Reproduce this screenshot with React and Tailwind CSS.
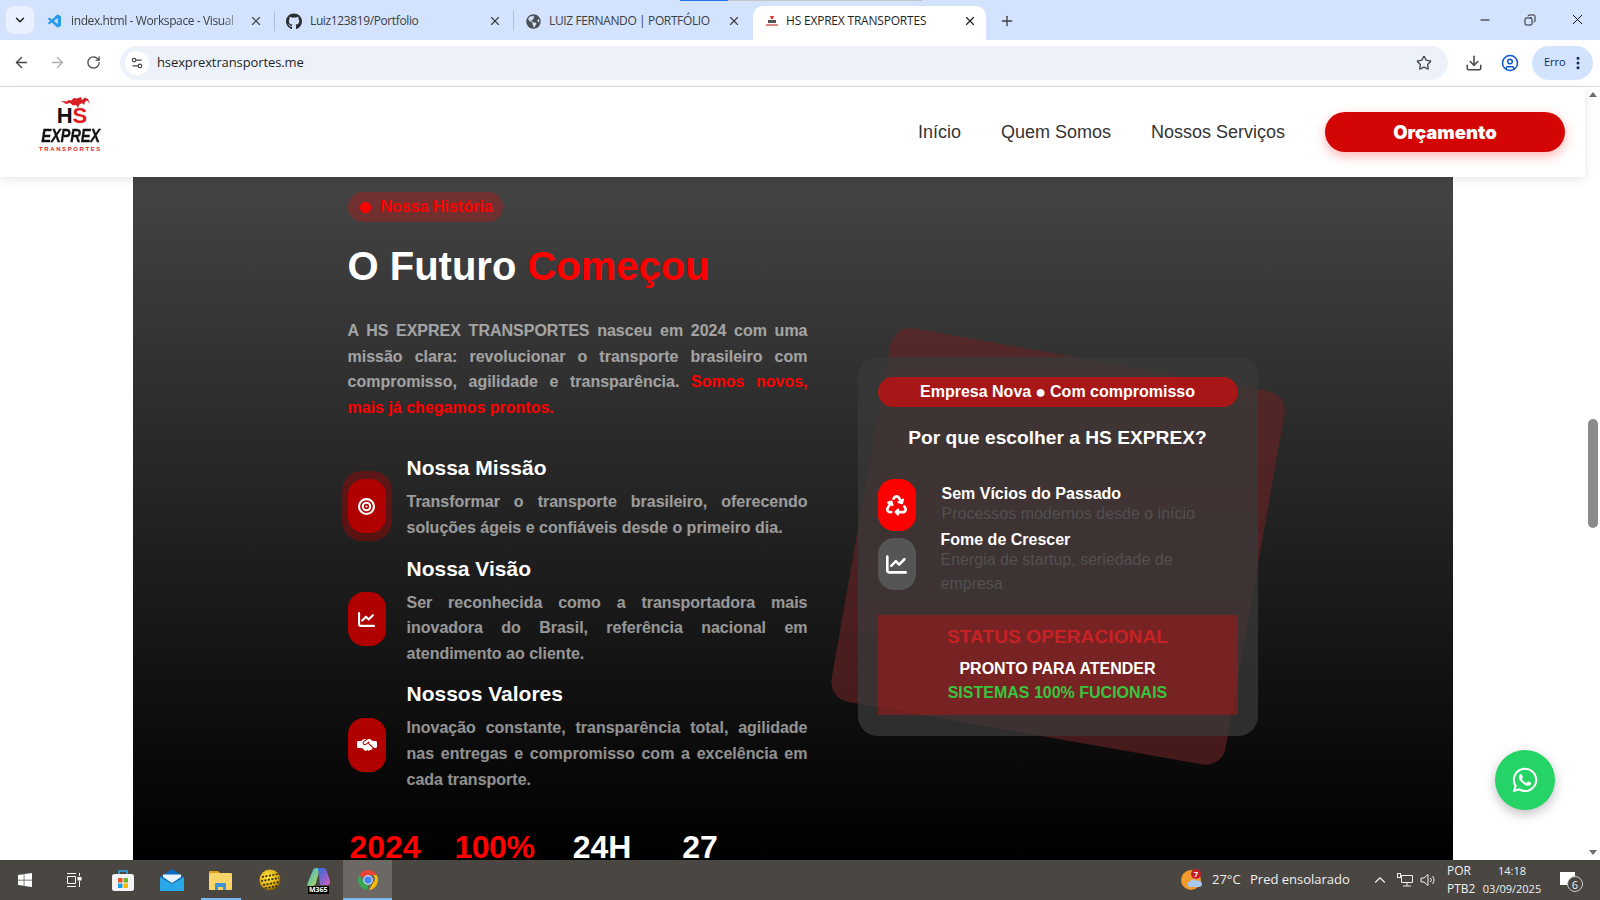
import React from "react"
import { ArrowLeft, ArrowRight, RotateCw, Star, Download, CircleUser, EllipsisVertical, Settings2, X, Plus, Minus, ChevronDown, ChevronUp, Copy } from "lucide-react"
import { FaGithub, FaGlobeAmericas, FaWindows } from "react-icons/fa"
import { FaBullseye, FaChartLine, FaHandshakeSimple, FaRecycle, FaWhatsapp } from "react-icons/fa6"
import { VscVscode } from "react-icons/vsc"

function Tab({ icon, title, fade, sep }) {
  return (
    <div className="relative flex h-[34px] w-[239px] shrink-0 items-center pb-[4px] pl-[11px] pr-[12px]">
      <span className="flex w-[16px] shrink-0 justify-center">{icon}</span>
      <span className={`ml-[8px] flex-1 overflow-hidden whitespace-nowrap text-[12px] tracking-[-0.38px] text-[#3c4043] ${fade ? "[mask-image:linear-gradient(to_right,black_88%,transparent)]" : ""}`}>{title}</span>
      <X size={14} strokeWidth={2} className="ml-[6px] shrink-0 text-[#3c4043]" />
      {sep && <span className="absolute right-0 top-[5px] h-[20px] w-px bg-[#a8c0e8]" />}
    </div>
  )
}

function TabStrip() {
  return (
    <div className="relative flex h-[40px] items-end bg-[#d3e3fd] pl-[6px] font-['Open_Sans',sans-serif]">
      <div className="absolute left-[680px] top-0 h-px w-[48px] bg-[#1a73e8]" />
      <div className="absolute left-[728px] top-0 h-px w-[194px] bg-[#c4c7c5]" />
      <div className="mb-[6px] flex h-[28px] w-[28px] items-center justify-center rounded-[8px] bg-[#e9f1fe] mr-[2px]">
        <ChevronDown size={14} strokeWidth={2.5} className="text-[#1f1f1f]" />
      </div>
      <Tab icon={<VscVscode size={17} className="text-[#2a9be8]" />} title="index.html - Workspace - Visual" fade sep />
      <Tab icon={<FaGithub size={17} className="text-[#2b2f33]" />} title="Luiz123819/Portfolio" sep />
      <Tab icon={<FaGlobeAmericas size={15} className="text-[#4d5156]" />} title="LUIZ FERNANDO | PORTFÓLIO" />
      <div className="flex h-[34px] w-[233px] shrink-0 items-center rounded-t-[10px] bg-white pb-[4px] pl-[12px] pr-[9px]">
        <svg width="14" height="12" viewBox="0 0 14 12">
          <path d="M5 1h4l-1 3H6z" fill="#d33" />
          <rect x="3" y="5" width="8" height="3" fill="#555" />
          <rect x="1" y="9" width="12" height="2" fill="#d88" />
        </svg>
        <span className="ml-[7px] flex-1 overflow-hidden whitespace-nowrap text-[12px] tracking-[-0.2px] text-[#1f1f1f]">HS EXPREX TRANSPORTES</span>
        <X size={14} strokeWidth={2} className="shrink-0 text-[#1f1f1f]" />
      </div>
      <div className="ml-[11px] flex h-[34px] w-[20px] items-center justify-center pb-[4px]">
        <Plus size={16} strokeWidth={2} className="text-[#3c4043]" />
      </div>
      <div className="ml-auto flex h-[40px] items-center pb-[1px] text-[#111]">
        <Minus size={14} strokeWidth={1.8} className="mr-[32px]" />
        <Copy size={12} strokeWidth={1.8} className="mr-[33px] -scale-x-100" />
        <X size={17} strokeWidth={1.4} className="mr-[14px]" />
      </div>
    </div>
  )
}

function Toolbar() {
  return (
    <div className="flex h-[47px] items-center border-b border-[#dadce0] bg-white pb-px font-['Open_Sans',sans-serif]">
      <ArrowLeft size={17} strokeWidth={2} className="ml-[13px] text-[#474747]" />
      <ArrowRight size={17} strokeWidth={2} className="ml-[19px] text-[#b0b0b0]" />
      <RotateCw size={15} strokeWidth={2} className="ml-[20px] text-[#474747]" />
      <div className="ml-[19px] flex h-[34px] w-[1328px] items-center rounded-full bg-[#edf2fa] pl-[5px] pr-[16px]">
        <span className="flex h-[24px] w-[24px] items-center justify-center rounded-full bg-white">
          <Settings2 size={14} strokeWidth={2} className="text-[#474747]" />
        </span>
        <span className="ml-[8px] text-[13px] tracking-[-0.1px] text-[#1f1f1f]">hsexprextransportes.me</span>
        <Star size={16} strokeWidth={2} className="ml-auto text-[#474747]" />
      </div>
      <Download size={18} strokeWidth={2} className="ml-[17px] text-[#474747]" />
      <CircleUser size={18} strokeWidth={2} className="ml-[18px] text-[#0b57d0]" />
      <div className="ml-[13px] flex h-[34px] w-[61px] items-center rounded-full bg-[#d3e3fd] pl-[12px]">
        <span className="text-[11px] text-[#0b2a5c]">Erro</span>
        <EllipsisVertical size={16} strokeWidth={2.5} className="ml-[4px] text-[#0b2a5c]" />
      </div>
    </div>
  )
}

function Logo() {
  return (
    <div className="mb-[15px] ml-[39px] flex w-[63px] flex-col items-center leading-none">
      <svg width="30" height="11" viewBox="0 0 30 11" className="ml-[10px]">
        <path d="M0 4l5 .5L8 3l2 .5L13 1l3 .5L20 0l1 3 3-2.500 3 1.500 2 5-3-3.500-2 1.500-1 3-2-2-3 2-1 3-2-3-3 .5L9 6 5 7z" fill="#d81f26" />
      </svg>
      <div className="ml-[3px] flex h-[16px] items-center text-[22px] font-bold leading-[16px] font-['Liberation_Sans',sans-serif]">
        <span className="text-[#111]">H</span>
        <span className="text-[#e01b22]">S</span>
      </div>
      <div className="mt-[5px] h-[14px] origin-center scale-x-[0.78] text-[19px] font-bold italic leading-[14px] tracking-[-0.3px] text-[#111] font-['Liberation_Sans',sans-serif] [-webkit-text-stroke:0.3px_#111]">EXPREX</div>
      <div className="mt-[4px] h-[5px] whitespace-nowrap text-[6px] font-bold leading-[5px] tracking-[1.6px] text-[#d81f26] font-['Liberation_Sans',sans-serif]">TRANSPORTES</div>
    </div>
  )
}

function Nav() {
  return (
    <header className="relative z-10 flex h-[90px] shrink-0 items-center bg-white shadow-[0_2px_10px_rgba(0,0,0,0.1)]">
      <Logo />
      <nav className="ml-auto flex items-center gap-[40px] text-[18px] text-[#333]">
        <span>Início</span>
        <span>Quem Somos</span>
        <span>Nossos Serviços</span>
      </nav>
      <div className="ml-[40px] mr-[20px] flex h-[40px] w-[240px] items-center justify-center rounded-[20px] bg-[#d40505] pt-[1px] text-[18.5px] font-black text-white shadow-[0_4px_12px_rgba(255,0,0,0.3)] font-['Inter',sans-serif]">
        Orçamento
      </div>
    </header>
  )
}

function Item({ icon, title, children, ring }) {
  return (
    <div className="flex items-center">
      <div className="relative mt-[2px] flex h-[54px] w-[38px] shrink-0 items-center justify-center rounded-[16px] bg-[#b00000] text-white">
        {ring && <span className="absolute -inset-x-[6px] -inset-y-[8px] rounded-[20px] bg-[#b00000]/40" />}
        <span className="relative">{icon}</span>
      </div>
      <div className="ml-[21px] flex-1 pb-[15px]">
        <h3 className="mb-[8px] text-[21px] font-bold leading-[26px] text-white">{title}</h3>
        <p className="text-justify text-[16px] font-bold leading-[25.6px] text-white/55">{children}</p>
      </div>
    </div>
  )
}

function LeftColumn() {
  return (
    <div className="w-[460px] shrink-0">
      <div className="flex h-[30px] w-[155px] items-center rounded-full bg-[#ff0000]/25 pl-[12px]">
        <span className="h-[11px] w-[11px] rounded-full bg-[#ff0000]" />
        <span className="ml-[10px] text-[16px] font-bold text-[#ff0000]">Nossa História</span>
      </div>
      <h2 className="mt-[19px] text-[40px] font-bold leading-[50px] text-white">
        O Futuro <span className="text-[#ff0000]">Começou</span>
      </h2>
      <p className="mt-[27px] text-justify text-[16px] font-bold leading-[25.6px] text-white/55">
        A HS EXPREX TRANSPORTES nasceu em 2024 com uma missão clara: revolucionar o transporte brasileiro com compromisso, agilidade e transparência. <span className="text-[#ff0000]">Somos novos, mais já chegamos prontos.</span>
      </p>
      <div className="mt-[35px]">
        <Item ring icon={<FaBullseye size={17} />} title="Nossa Missão">Transformar o transporte brasileiro, oferecendo soluções ágeis e confiáveis desde o primeiro dia.</Item>
        <Item icon={<FaChartLine size={17} />} title="Nossa Visão">Ser reconhecida como a transportadora mais inovadora do Brasil, referência nacional em atendimento ao cliente.</Item>
        <Item icon={<FaHandshakeSimple size={20} />} title="Nossos Valores">Inovação constante, transparência total, agilidade nas entregas e compromisso com a excelência em cada transporte.</Item>
      </div>
      <div className="mt-[20px] flex gap-[32px] text-center text-[32px] font-bold leading-[40px]">
        <span className="w-[75px] text-[#ff0000]">2024</span>
        <span className="w-[78px] tracking-[-0.5px] text-[#ff0000]">100%</span>
        <span className="w-[75px] text-white">24H</span>
        <span className="w-[57px] text-white">27</span>
      </div>
    </div>
  )
}

function RightCard() {
  return (
    <div className="relative mt-[165px] h-[379px] w-[400px] shrink-0">
      <div className="absolute inset-0 rotate-[10deg] rounded-[20px] bg-[#672424]/65" />
      <div className="relative h-full rounded-[20px] bg-[#3a3a3a]/75 p-[20px]">
        <div className="flex h-[30px] items-center justify-center rounded-full bg-[#a81717] text-[16px] font-bold text-white">Empresa Nova <span className="mx-[4px] text-[18px] leading-none">●</span> Com compromisso</div>
        <h3 className="mt-[19px] h-[24px] text-center text-[19.2px] font-bold leading-[24px] text-white">Por que escolher a HS EXPREX?</h3>
        <div className="mt-[29px] flex h-[52px] items-center">
          <span className="flex h-[52px] w-[38px] shrink-0 items-center justify-center rounded-[16px] bg-[#ff0000] text-white"><FaRecycle size={21} /></span>
          <div className="ml-[26px] pt-[2px]">
            <div className="text-[16px] font-bold leading-[16px] text-white">Sem Vícios do Passado</div>
            <div className="text-[16px] leading-[24px] text-[#505050]">Processos modernos desde o início</div>
          </div>
        </div>
        <div className="mt-[1px] flex h-[64px] items-center">
          <span className="flex h-[52px] w-[38px] shrink-0 items-center justify-center rounded-[16px] bg-[#555] text-white"><FaChartLine size={21} /></span>
          <div className="ml-[25px] w-[297px]">
            <div className="text-[16px] font-bold leading-[16px] text-white">Fome de Crescer</div>
            <div className="text-[16px] leading-[24px] text-[#505050]">Energia de startup, seriedade de empresa</div>
          </div>
        </div>
        <div className="mt-[19px] flex h-[100px] flex-col items-center bg-[#ff0000]/30 pt-[10px] font-bold">
          <div className="text-[19.2px] leading-[24px] text-[#c62226]">STATUS OPERACIONAL</div>
          <div className="mt-[9px] text-[16px] leading-[22px] text-white">PRONTO PARA ATENDER</div>
          <div className="mt-[1px] text-[16px] leading-[24px] text-[#38c440]">SISTEMAS 100% FUCIONAIS</div>
        </div>
      </div>
    </div>
  )
}

function Scrollbar() {
  return (
    <div className="flex w-[15px] shrink-0 flex-col items-center bg-white py-[5px] text-[#7a7a7a]">
      <div className="h-0 w-0 border-x-[4px] border-b-[5px] border-x-transparent border-b-[#6f6f6f]" />
      <div className="mt-[322px] h-[109px] w-[10px] rounded-full bg-[#8b8b8b]" />
      <div className="mt-auto h-0 w-0 border-x-[4px] border-t-[5px] border-x-transparent border-t-[#6f6f6f]" />
    </div>
  )
}

function ChromeLogo() {
  return (
    <svg width="24" height="24" viewBox="0 0 48 48">
      <path d="M24 4a20 20 0 0 1 17.3 10H24a10 10 0 0 0-9.2 6L6.9 13.7A20 20 0 0 1 24 4z" fill="#ea4335" />
      <path d="M41.3 14A20 20 0 0 1 26 43.9L34 30a10 10 0 0 0 0-16z" fill="#fbbc04" />
      <path d="M6.9 13.7 15.5 29a10 10 0 0 0 9.5 5l-3.5 9.8A20 20 0 0 1 6.9 13.7z" fill="#34a853" />
      <circle cx="24" cy="24" r="9.5" fill="#fff" />
      <circle cx="24" cy="24" r="7.5" fill="#4285f4" />
    </svg>
  )
}

function Taskbar() {
  const slot = "flex h-[40px] w-[49px] items-center justify-center"
  return (
    <div className="flex h-[40px] shrink-0 items-center bg-[#4a4642] font-['Open_Sans',sans-serif] text-[#f0f0f0]">
      <div className={slot}><FaWindows size={16} className="text-white" /></div>
      <div className={slot}>
        <svg width="16" height="14" viewBox="0 0 16 14" fill="none" stroke="#fff" strokeWidth="1">
          <path d="M1 .5h9M1 13.5h9M1.5 3.5h8v7h-8zM13.5 0v3M13.5 8v6" />
          <rect x="12" y="4.5" width="3" height="2.5" fill="#fff" />
        </svg>
      </div>
      <div className={slot}>
        <svg width="24" height="24" viewBox="0 0 24 24">
          <path d="M8 6V3h8v3" fill="none" stroke="#35a7e8" strokeWidth="1.6" />
          <rect x="1" y="6" width="22" height="17" rx="2.5" fill="#f3f3f3" />
          <rect x="7" y="10" width="4.5" height="4.5" fill="#e8512a" />
          <rect x="12.5" y="10" width="4.5" height="4.5" fill="#6fb52c" />
          <rect x="7" y="15.5" width="4.5" height="4.5" fill="#1ba1e2" />
          <rect x="12.5" y="15.5" width="4.5" height="4.5" fill="#fbb900" />
        </svg>
      </div>
      <div className={slot}>
        <svg width="24" height="22" viewBox="0 0 24 22">
          <path d="M12 0 24 8 12 15 0 8z" fill="#0a6cc4" />
          <path d="M0 8 12 15 24 8v14H0z" fill="#27a8e8" />
          <path d="M3 5.5h18V8l-9 6-9-6z" fill="#e8f6ff" />
        </svg>
      </div>
      <div className={`${slot} relative`}>
        <svg width="23" height="20" viewBox="0 0 23 20">
          <path d="M0 2a1 1 0 0 1 1-1h8l2 2h-11z" fill="#e2a21e" />
          <rect y="3" width="23" height="17" rx="1" fill="#f7d568" />
          <path d="M6 20v-6a1 1 0 0 1 1-1h9a1 1 0 0 1 1 1v6h-3v-3H9v3z" fill="#3a92d8" />
        </svg>
        <div className="absolute bottom-0 left-[5px] h-[2px] w-[40px] bg-[#7cb6ea]" />
      </div>
      <div className={slot}>
        <svg width="22" height="22" viewBox="0 0 22 22">
          <defs>
            <radialGradient id="ball" cx="40%" cy="35%" r="70%">
              <stop offset="0" stopColor="#ffe93d" />
              <stop offset="0.7" stopColor="#d9a60f" />
              <stop offset="1" stopColor="#4d3d0c" />
            </radialGradient>
          </defs>
          <circle cx="11" cy="11" r="10.5" fill="url(#ball)" />
          <path d="M3 8l16-3M2 12l18-3M4 16l16-3M6 19l12-2" stroke="#2a2410" strokeWidth="1.6" strokeDasharray="2 1.5" fill="none" />
        </svg>
      </div>
      <div className={`${slot} relative`}>
        <svg width="24" height="18" viewBox="0 0 24 18" className="-mt-[6px]">
          <defs>
            <linearGradient id="m365a" x1="0" y1="0" x2="1" y2="1">
              <stop offset="0" stopColor="#2fb6ea" />
              <stop offset="1" stopColor="#c6d93c" />
            </linearGradient>
            <linearGradient id="m365b" x1="0" y1="0" x2="1" y2="1">
              <stop offset="0" stopColor="#1f6fe0" />
              <stop offset="1" stopColor="#e15bb8" />
            </linearGradient>
          </defs>
          <path d="M6 2c.5-1 1.5-2 3-2h4L9 15c-.4 1.500-1.500 3-3 3H1.500C.5 18 0 17 .3 16z" fill="url(#m365a)" />
          <path d="M11 0h5c2 0 3 1 4 4l3 9c.5 2-1 4-2 4h-8z" fill="url(#m365b)" />
        </svg>
        <span className="absolute bottom-[6px] left-[14px] bg-black px-[1px] text-[7px] font-bold leading-[8px] text-white">M365</span>
      </div>
      <div className={`${slot} relative bg-[#6c6863]`}>
        <ChromeLogo />
        <div className="absolute bottom-0 left-0 h-[2px] w-full bg-[#7cb6ea]" />
      </div>

      <div className="ml-auto flex h-[40px] items-center text-[13px]">
        <svg width="22" height="22" viewBox="0 0 22 22" className="mr-[9px]">
          <circle cx="10" cy="11" r="10" fill="#f29a2e" />
          <path d="M8 18a3 3 0 0 1 1-5.5 4 4 0 0 1 7-.5 3 3 0 0 1 3 6z" fill="#a9c8ee" />
          <circle cx="15" cy="5" r="5" fill="#c8202a" />
          <text x="15" y="7.500" textAnchor="middle" fontSize="7" fontWeight="700" fill="#fff">7</text>
        </svg>
        <span className="w-[29px] whitespace-nowrap">27°C</span>
        <span className="ml-[9px] w-[100px] whitespace-nowrap">Pred ensolarado</span>
        <ChevronUp size={18} strokeWidth={1.5} className="ml-[21px]" />
        <svg width="16" height="14" viewBox="0 0 16 14" fill="none" stroke="#f0f0f0" className="ml-[8px]">
          <path d="M4.5 2.500h11v7h-11zM10 9.500v3M6 13h8" />
          <rect x=".5" y=".5" width="3" height="4" fill="#4a4642" />
        </svg>
        <svg width="16" height="14" viewBox="0 0 16 14" fill="none" stroke="#f0f0f0" className="ml-[7px]">
          <path d="M1 5h3l4-3.500v11L4 9H1zM10.500 5a3 3 0 0 1 0 4M12.500 3a6 6 0 0 1 0 8" />
        </svg>
        <div className="ml-[11px] flex w-[33px] flex-col text-[12px] leading-[18px]">
          <span>POR</span>
          <span>PTB2</span>
        </div>
        <div className="ml-px flex w-[62px] flex-col items-center text-[11px] leading-[18px]">
          <span>14:18</span>
          <span>03/09/2025</span>
        </div>
        <div className="relative ml-[17px] mr-[17px] h-[26px] w-[23px]">
          <div className="absolute left-0 top-[5px] h-[13px] w-[15px] bg-white" />
          <div className="absolute bottom-[1px] right-0 flex h-[16px] w-[16px] items-center justify-center rounded-full border border-[#cfcfcf] bg-[#4a4642] text-[11px] leading-none">6</div>
        </div>
      </div>
    </div>
  )
}

export default function App() {
  return (
    <div className="flex h-screen w-full flex-col overflow-hidden bg-white font-['Liberation_Sans',Arial,sans-serif]">
      <TabStrip />
      <Toolbar />
      <div className="relative flex min-h-0 flex-1">
        <div className="flex min-w-0 flex-1 flex-col">
          <Nav />
          <section className="mx-auto flex min-h-0 w-[1320px] flex-1 gap-[50px] overflow-hidden bg-[linear-gradient(to_bottom,#444444,#000000)] pl-[215px] pt-[15px]">
            <LeftColumn />
            <RightCard />
          </section>
        </div>
        <Scrollbar />
        <div className="absolute bottom-[50px] right-[45px] z-20 flex h-[60px] w-[60px] items-center justify-center rounded-full bg-[#25d366] text-white shadow-[0_4px_12px_rgba(0,0,0,0.25)]">
          <FaWhatsapp size={28} />
        </div>
      </div>
      <Taskbar />
    </div>
  )
}
